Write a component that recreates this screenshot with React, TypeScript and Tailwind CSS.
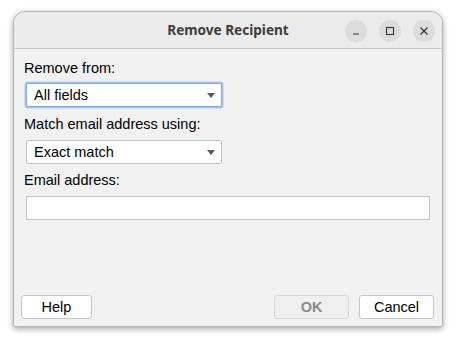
import React from 'react'

const SelectBox = ({ value, focused }: { value: string; focused?: boolean }) => (
  <div
    className={
      'ml-[2px] flex h-[24px] w-[196px] items-center justify-between rounded-[2px] bg-white pl-[7px] pr-[6px] ' +
      (focused ? 'border border-[#7ea7dc] shadow-[0_0_0_1.5px_#a9c7ee]' : 'border border-[#c4c4c4]')
    }
  >
    <span className="text-[14.5px] leading-none text-black">{value}</span>
    <span className="mt-[1px] h-0 w-0 border-x-[4.5px] border-t-[5px] border-x-transparent border-t-[#5a5a5a]" />
  </div>
)

const TitleButton = ({ children }: { children: React.ReactNode }) => (
  <div className="flex h-[22px] w-[22px] items-center justify-center rounded-full bg-[#dcdcdc]">
    {children}
  </div>
)

export default function App() {
  return (
    <div
      className="h-[344px] w-[456px] bg-white pl-[13px] pt-[11px]"
      style={{ fontFamily: '"Liberation Sans", Arial, sans-serif' }}
    >
      <div className="flex h-[316px] w-[430px] flex-col overflow-hidden rounded-t-[12px] rounded-b-[2px] border border-[#b3b3b3] bg-[#f1f1f1] shadow-[0_2px_6px_rgba(0,0,0,0.35)]">
        {/* title bar */}
        <div className="relative flex h-[37px] shrink-0 items-center justify-center border-b border-[#c8c8c8] bg-[#ebebeb]">
          <span
            className="text-[13.6px] font-bold text-[#3d3d3d]"
            style={{ fontFamily: '"Noto Sans", "Open Sans", sans-serif' }}
          >
            Remove Recipient
          </span>
          <div className="absolute right-[7px] top-[8px] flex gap-[12px]">
            <TitleButton>
              <svg width="10" height="10" viewBox="0 0 10 10">
                <path d="M2 8h6" stroke="#333" strokeWidth="1.2" />
              </svg>
            </TitleButton>
            <TitleButton>
              <svg width="10" height="10" viewBox="0 0 10 10">
                <rect x="1.5" y="1.5" width="7" height="7" fill="none" stroke="#333" strokeWidth="1.1" />
              </svg>
            </TitleButton>
            <TitleButton>
              <svg width="10" height="10" viewBox="0 0 10 10">
                <path d="M1.5 1.5l7 7M8.5 1.5l-7 7" stroke="#333" strokeWidth="1.2" />
              </svg>
            </TitleButton>
          </div>
        </div>

        {/* body */}
        <div className="flex flex-1 flex-col pl-[10px] pr-[12px] pt-[10px] text-[14.5px] leading-[18px] text-black">
          <div>Remove from:</div>
          <div className="mt-[6px]">
            <SelectBox value="All fields" focused />
          </div>
          <div className="mt-[8px]">Match email address using:</div>
          <div className="mt-[7px]">
            <SelectBox value="Exact match" />
          </div>
          <div className="mt-[7px]">Email address:</div>
          <div className="ml-[2px] mt-[7px] h-[24px] w-[404px] border border-[#c4c4c4] bg-white" />

          <div className="flex-1" />

          <div className="-ml-[3px] mb-[7px] -mr-[4px] flex items-center">
            <button className="h-[24px] w-[71px] rounded-[3px] border border-[#c6c6c6] bg-white text-[14.5px] text-black">
              Help
            </button>
            <div className="flex-1" />
            <button className="h-[24px] w-[75px] rounded-[3px] border border-[#d6d6d6] bg-[#efefef] text-[14.5px] font-bold text-[#8a8a8a]">
              OK
            </button>
            <button className="ml-[10px] h-[24px] w-[75px] rounded-[3px] border border-[#c6c6c6] bg-white text-[14.5px] text-black">
              Cancel
            </button>
          </div>
        </div>
      </div>
    </div>
  )
}
